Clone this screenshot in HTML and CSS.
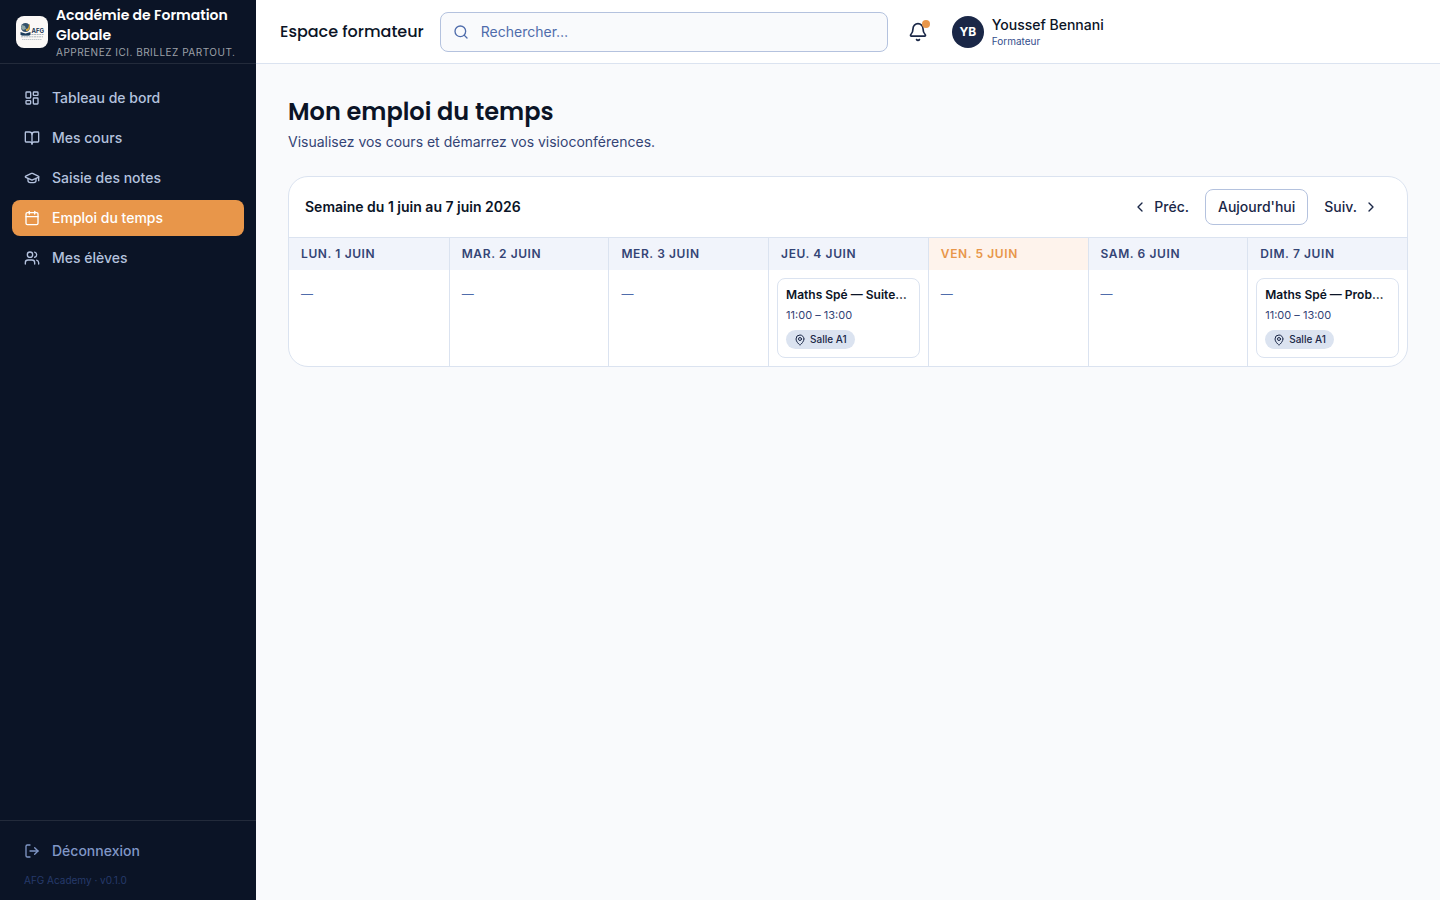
FILE: index.html
```html
<!DOCTYPE html>
<html lang="fr">
<head>
<meta charset="utf-8">
<meta name="viewport" content="width=device-width, initial-scale=1">
<title>Mon emploi du temps</title>
<link rel="stylesheet" href="styles.css">
</head>
<body>
<div class="app">
  <aside class="sidebar">
    <div class="brand">
      <svg class="brand-logo" viewBox="0 0 32 32" aria-hidden="true">
        <rect width="32" height="32" rx="8" fill="#fbf8f6"/>
        <circle cx="9.500" cy="11.500" r="4.500" fill="#34516a"/>
        <path d="M6 9l3 1 1 3-3 1-2-2z" fill="#8fa6a4"/>
        <path d="M10 13c2 0 3-2 3-5l1 1c0 4-1 6-4 6z" fill="#d6a93d"/>
        <path d="M4.500 16l5 1.500 5-1.500v3l-5 .5-5-.5z" fill="#1b3c5c"/>
        <path d="M5.500 19.500h8" stroke="#6d8496"/>
        <text class="logo-text" x="15.500" y="16.500" fill="#163453">AFG</text>
        <path d="M15.500 18.500h12M5 20.800h22" stroke="#a9b5be" stroke-dasharray="2 .6"/>
        <path d="M6 23.500h20" stroke="#c2cacf" stroke-dasharray="1.500 .5"/>
      </svg>
      <div class="brand-copy">
        <div class="brand-name">Académie de Formation Globale</div>
        <div class="brand-tag">Apprenez ici. Brillez partout.</div>
      </div>
    </div>
    <nav class="nav" aria-label="Navigation principale">
      <a class="nav-item" href="#"><svg class="icon" viewBox="0 0 24 24"><rect width="7" height="9" x="3" y="3" rx="1"/><rect width="7" height="5" x="14" y="3" rx="1"/><rect width="7" height="9" x="14" y="12" rx="1"/><rect width="7" height="5" x="3" y="16" rx="1"/></svg>Tableau de bord</a>
      <a class="nav-item" href="#"><svg class="icon" viewBox="0 0 24 24"><path d="M12 7v14"/><path d="M3 18a1 1 0 0 1-1-1V4a1 1 0 0 1 1-1h5a4 4 0 0 1 4 4 4 4 0 0 1 4-4h5a1 1 0 0 1 1 1v13a1 1 0 0 1-1 1h-6a3 3 0 0 0-3 3 3 3 0 0 0-3-3z"/></svg>Mes cours</a>
      <a class="nav-item" href="#"><svg class="icon" viewBox="0 0 24 24"><path d="M21.420 10.922a1 1 0 0 0-.019-1.838L12.830 5.180a2 2 0 0 0-1.660 0L2.600 9.080a1 1 0 0 0 0 1.832l8.570 3.908a2 2 0 0 0 1.660 0z"/><path d="M22 10v6"/><path d="M6 12.500V16a6 3 0 0 0 12 0v-3.500"/></svg>Saisie des notes</a>
      <a class="nav-item nav-item-active" href="#" aria-current="page"><svg class="icon" viewBox="0 0 24 24"><path d="M8 2v4"/><path d="M16 2v4"/><rect width="18" height="18" x="3" y="4" rx="2"/><path d="M3 10h18"/></svg>Emploi du temps</a>
      <a class="nav-item" href="#"><svg class="icon" viewBox="0 0 24 24"><path d="M16 21v-2a4 4 0 0 0-4-4H6a4 4 0 0 0-4 4v2"/><circle cx="9" cy="7" r="4"/><path d="M22 21v-2a4 4 0 0 0-3-3.870"/><path d="M16 3.130a4 4 0 0 1 0 7.750"/></svg>Mes élèves</a>
    </nav>
    <div class="sidebar-foot">
      <button class="nav-item logout" type="button"><svg class="icon" viewBox="0 0 24 24"><path d="M9 21H5a2 2 0 0 1-2-2V5a2 2 0 0 1 2-2h4"/><path d="m16 17 5-5-5-5"/><path d="M21 12H9"/></svg>Déconnexion</button>
      <div class="version">AFG Academy · v0.1.0</div>
    </div>
  </aside>

  <div class="content">
    <header class="topbar">
      <div class="space-name">Espace formateur</div>
      <label class="search">
        <svg class="icon" viewBox="0 0 24 24" aria-hidden="true"><circle cx="11" cy="11" r="8"/><path d="m21 21-4.300-4.300"/></svg>
        <input class="search-input" type="search" placeholder="Rechercher…" aria-label="Rechercher">
      </label>
      <button class="bell" type="button" aria-label="Notifications">
        <svg class="icon icon-lg" viewBox="0 0 24 24"><path d="M10.268 21a2 2 0 0 0 3.464 0"/><path d="M3.262 15.326A1 1 0 0 0 4 17h16a1 1 0 0 0 .740-1.673C19.410 13.956 18 12.499 18 8A6 6 0 0 0 6 8c0 4.499-1.411 5.956-2.738 7.326"/></svg>
        <span class="bell-dot"></span>
      </button>
      <button class="user" type="button">
        <span class="avatar">YB</span>
        <span class="user-copy"><span class="user-name">Youssef Bennani</span><span class="user-role">Formateur</span></span>
      </button>
    </header>

    <main class="main">
      <div class="page-head">
        <h1 class="page-title">Mon emploi du temps</h1>
        <p class="page-sub">Visualisez vos cours et démarrez vos visioconférences.</p>
      </div>
      <section class="calendar">
        <div class="toolbar">
          <h2 class="week">Semaine du 1 juin au 7 juin 2026</h2>
          <div class="actions">
            <button class="btn" type="button"><svg class="icon" viewBox="0 0 24 24"><path d="m15 18-6-6 6-6"/></svg>Préc.</button>
            <button class="btn btn-outline" type="button">Aujourd'hui</button>
            <button class="btn" type="button">Suiv.<svg class="icon" viewBox="0 0 24 24"><path d="m9 18 6-6-6-6"/></svg></button>
          </div>
        </div>
        <table class="week-table">
          <thead>
            <tr><th scope="col">Lun. 1 juin</th><th scope="col">Mar. 2 juin</th><th scope="col">Mer. 3 juin</th><th scope="col">Jeu. 4 juin</th><th scope="col" class="today">Ven. 5 juin</th><th scope="col">Sam. 6 juin</th><th scope="col">Dim. 7 juin</th></tr>
          </thead>
          <tbody>
            <tr>
              <td><p class="empty">—</p></td>
              <td><p class="empty">—</p></td>
              <td><p class="empty">—</p></td>
              <td><div class="event"><p class="event-title">Maths Spé — Suites numériques</p><p class="event-time">11:00 – 13:00</p><span class="room"><svg class="icon icon-sm" viewBox="0 0 24 24"><path d="M20 10c0 4.993-5.539 10.193-7.399 11.799a1 1 0 0 1-1.202 0C9.539 20.193 4 14.993 4 10a8 8 0 0 1 16 0"/><circle cx="12" cy="10" r="3"/></svg>Salle A1</span></div></td>
              <td><p class="empty">—</p></td>
              <td><p class="empty">—</p></td>
              <td><div class="event"><p class="event-title">Maths Spé — Probabilités</p><p class="event-time">11:00 – 13:00</p><span class="room"><svg class="icon icon-sm" viewBox="0 0 24 24"><path d="M20 10c0 4.993-5.539 10.193-7.399 11.799a1 1 0 0 1-1.202 0C9.539 20.193 4 14.993 4 10a8 8 0 0 1 16 0"/><circle cx="12" cy="10" r="3"/></svg>Salle A1</span></div></td>
            </tr>
          </tbody>
        </table>
      </section>
    </main>
  </div>
</div>
</body>
</html>
```
FILE: styles.css
```css
*, *::before, *::after { box-sizing: border-box; }
body, h1, h2, p { margin: 0; }
body {
  font: 400 14px/20px Inter, "Liberation Sans", sans-serif;
  color: #0b1426;
  background: #f9fafc;
}
button, input { font: inherit; color: inherit; }
button { border: 0; background: none; padding: 0; cursor: pointer; }
a { color: inherit; text-decoration: none; }

.icon {
  width: 16px;
  height: 16px;
  flex: none;
  fill: none;
  stroke: currentColor;
  stroke-width: 2;
  stroke-linecap: round;
  stroke-linejoin: round;
}
.icon-lg { width: 20px; height: 20px; }
.icon-sm { width: 12px; height: 12px; }

.app { display: flex; min-height: 100vh; }

/* Sidebar */
.sidebar {
  display: flex;
  flex-direction: column;
  flex: none;
  width: 256px;
  background: #0b1426;
  color: #b4c2de;
}
.brand {
  display: flex;
  align-items: center;
  gap: 8px;
  height: 64px;
  padding: 0 16px;
  border-bottom: 1px solid #232b3b;
}
.brand-logo { width: 32px; height: 32px; flex: none; }
.logo-text { font: 700 6px Inter, sans-serif; }
.brand-name {
  font: 600 14px/20px Poppins, Inter, sans-serif;
  color: #fff;
}
.brand-tag {
  font-size: 10px;
  line-height: 14px;
  letter-spacing: 0.5px;
  text-transform: uppercase;
  white-space: nowrap;
  color: #9da1a8;
}
.nav {
  display: flex;
  flex-direction: column;
  gap: 4px;
  flex: 1;
  padding: 16px 12px;
}
.nav-item {
  display: flex;
  align-items: center;
  gap: 12px;
  width: 100%;
  padding: 8px 12px;
  border-radius: 8px;
  font-weight: 500;
}
.nav-item-active { background: #e8964a; color: #fff; }
.sidebar-foot { padding: 12px; border-top: 1px solid #232b3b; }
.logout { color: #8097c6; }
.version {
  margin-top: 4px;
  padding: 0 12px;
  font-size: 10px;
  line-height: 15px;
  color: #263a6b;
}

/* Top bar */
.content { flex: 1; min-width: 0; }
.topbar {
  display: flex;
  align-items: center;
  gap: 12px;
  height: 64px;
  padding: 0 24px;
  background: #fff;
  border-bottom: 1px solid #dbe3f0;
}
.space-name {
  margin-right: 4px;
  font: 500 16px/24px Poppins, Inter, sans-serif;
  white-space: nowrap;
}
.search {
  display: flex;
  align-items: center;
  gap: 12px;
  flex: 0 1 448px;
  min-width: 0;
  height: 40px;
  padding: 0 12px;
  border: 1px solid #b4c2de;
  border-radius: 8px;
  background: #f9fafc;
  color: #4f6cab;
}
.search-input {
  flex: 1;
  min-width: 0;
  padding: 0;
  border: 0;
  outline: 0;
  background: none;
}
.search-input::placeholder { color: #4f6cab; opacity: 1; }
.bell {
  position: relative;
  display: grid;
  place-items: center;
  flex: none;
  width: 36px;
  height: 36px;
  color: #1a2747;
}
.bell-dot {
  position: absolute;
  top: 6px;
  right: 6px;
  width: 8px;
  height: 8px;
  border-radius: 50%;
  background: #e8964a;
}
.user {
  display: flex;
  align-items: center;
  gap: 8px;
  padding: 4px;
  text-align: left;
}
.avatar {
  display: grid;
  place-items: center;
  flex: none;
  width: 32px;
  height: 32px;
  border-radius: 50%;
  background: #1a2747;
  color: #fff;
  font-size: 12px;
  font-weight: 700;
}
.user-copy { display: flex; flex-direction: column; }
.user-name { line-height: 18px; font-weight: 500; white-space: nowrap; }
.user-role { font-size: 10px; line-height: 14px; color: #344e8c; }

/* Page */
.main { padding: 32px; }
.page-head { margin-bottom: 24px; }
.page-title { font: 600 24px/32px Poppins, Inter, sans-serif; }
.page-sub { margin-top: 4px; color: #344475; }

.calendar {
  overflow: hidden;
  border: 1px solid #dbe3f0;
  border-radius: 20px;
  background: #fff;
}
.toolbar {
  display: flex;
  align-items: center;
  justify-content: space-between;
  padding: 12px 16px;
  border-bottom: 1px solid #dbe3f0;
}
.week { font-size: 14px; line-height: 20px; font-weight: 600; }
.actions { display: flex; gap: 4px; }
.btn {
  display: flex;
  align-items: center;
  gap: 6px;
  height: 36px;
  padding: 0 12px;
  border-radius: 8px;
  font-weight: 500;
  color: #1a2747;
}
.btn-outline { border: 1px solid #b4c2de; }

.week-table {
  width: 100%;
  table-layout: fixed;
  border-collapse: separate;
  border-spacing: 0;
}
.week-table th {
  padding: 8px 12px;
  background: #f1f4fb;
  color: #344475;
  font-size: 12px;
  line-height: 16px;
  font-weight: 600;
  letter-spacing: 0.6px;
  text-align: left;
  text-transform: uppercase;
}
.week-table th.today { background: #fef3ec; color: #e8964a; }
.week-table td { padding: 8px; vertical-align: top; }
.week-table th + th, .week-table td + td { border-left: 1px solid #dbe3f0; }
.empty { padding: 8px 4px; font-size: 12px; line-height: 16px; color: #4f6cab; }
.event { padding: 8px; border: 1px solid #dbe3f0; border-radius: 8px; }
.event-title {
  overflow: hidden;
  font-size: 12px;
  line-height: 16px;
  font-weight: 600;
  text-overflow: ellipsis;
  white-space: nowrap;
}
.event-time { margin-top: 4px; font-size: 11px; line-height: 16px; color: #344475; }
.room {
  display: flex;
  align-items: center;
  gap: 4px;
  width: fit-content;
  margin-top: 7px;
  padding: 2px 8px;
  border-radius: 10px;
  background: #dbe3f0;
  color: #1a2747;
  font-size: 10px;
  line-height: 15px;
  font-weight: 500;
}
```
